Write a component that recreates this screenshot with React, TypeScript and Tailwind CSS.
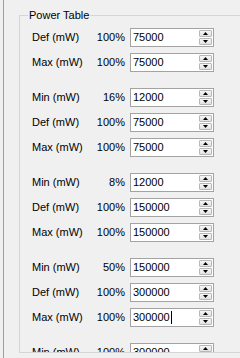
import React from 'react'

type Row = { label: string; pct: string; value: string; caret?: boolean }

const groups: Row[][] = [
  [
    { label: 'Def (mW)', pct: '100%', value: '75000' },
    { label: 'Max (mW)', pct: '100%', value: '75000' },
  ],
  [
    { label: 'Min (mW)', pct: '16%', value: '12000' },
    { label: 'Def (mW)', pct: '100%', value: '75000' },
    { label: 'Max (mW)', pct: '100%', value: '75000' },
  ],
  [
    { label: 'Min (mW)', pct: '8%', value: '12000' },
    { label: 'Def (mW)', pct: '100%', value: '150000' },
    { label: 'Max (mW)', pct: '100%', value: '150000' },
  ],
  [
    { label: 'Min (mW)', pct: '50%', value: '150000' },
    { label: 'Def (mW)', pct: '100%', value: '300000' },
    { label: 'Max (mW)', pct: '100%', value: '300000', caret: true },
  ],
  [{ label: 'Min (mW)', pct: '100%', value: '300000' }],
]

function Spinner() {
  return (
    <div className="flex w-[15px] flex-col gap-px p-px">
      <div className="flex h-[8px] items-center justify-center rounded-[1px] border border-[#b8b8b8] bg-gradient-to-b from-[#f6f6f6] to-[#e2e2e2]">
        <svg width="5" height="3" viewBox="0 0 5 3">
          <path d="M2.5 0 L5 3 L0 3 Z" fill="#000" />
        </svg>
      </div>
      <div className="flex h-[8px] items-center justify-center rounded-[1px] border border-[#b8b8b8] bg-gradient-to-b from-[#f6f6f6] to-[#e2e2e2]">
        <svg width="5" height="3" viewBox="0 0 5 3">
          <path d="M0 0 L5 0 L2.5 3 Z" fill="#000" />
        </svg>
      </div>
    </div>
  )
}

function PowerRow({ row }: { row: Row }) {
  return (
    <div className="flex h-[25px] items-center whitespace-nowrap">
      <span className="w-[65px] shrink-0 pl-[12px]">{row.label}</span>
      <span className="w-[40px] shrink-0 text-right">{row.pct}</span>
      <div className="ml-[5px] flex h-[19px] w-[84px] shrink-0 items-stretch border border-[#a3a3a3] bg-white">
        <div className="flex flex-1 items-center pl-[2px]">
          {row.value}
          {row.caret ? <span className="ml-px h-[13px] w-px bg-black" /> : null}
        </div>
        <Spinner />
      </div>
    </div>
  )
}

export default function App() {
  return (
    <div
      className="relative h-[358px] w-[240px] overflow-hidden bg-[#f0f0f0] text-[11px] text-black"
      style={{ fontFamily: '"Liberation Sans", Arial, sans-serif' }}
    >
      <div className="ml-[3px] h-full border-l border-[#a0a0a0] pl-[15px] pt-[15px]">
        <div className="relative h-[338px] border-l border-t border-[#d5d5d5]">
          <span className="absolute left-[8px] top-[-8px] bg-[#f0f0f0] px-px leading-[15px]">
            Power Table
          </span>
          <div className="h-[337px] overflow-hidden border-b border-[#d5d5d5] pt-[9px]">
            {groups.map((g, i) => (
              <div key={i} className={i > 0 ? 'mt-[10px]' : ''}>
                {g.map((r, j) => (
                  <PowerRow key={j} row={r} />
                ))}
              </div>
            ))}
          </div>
        </div>
      </div>
    </div>
  )
}
